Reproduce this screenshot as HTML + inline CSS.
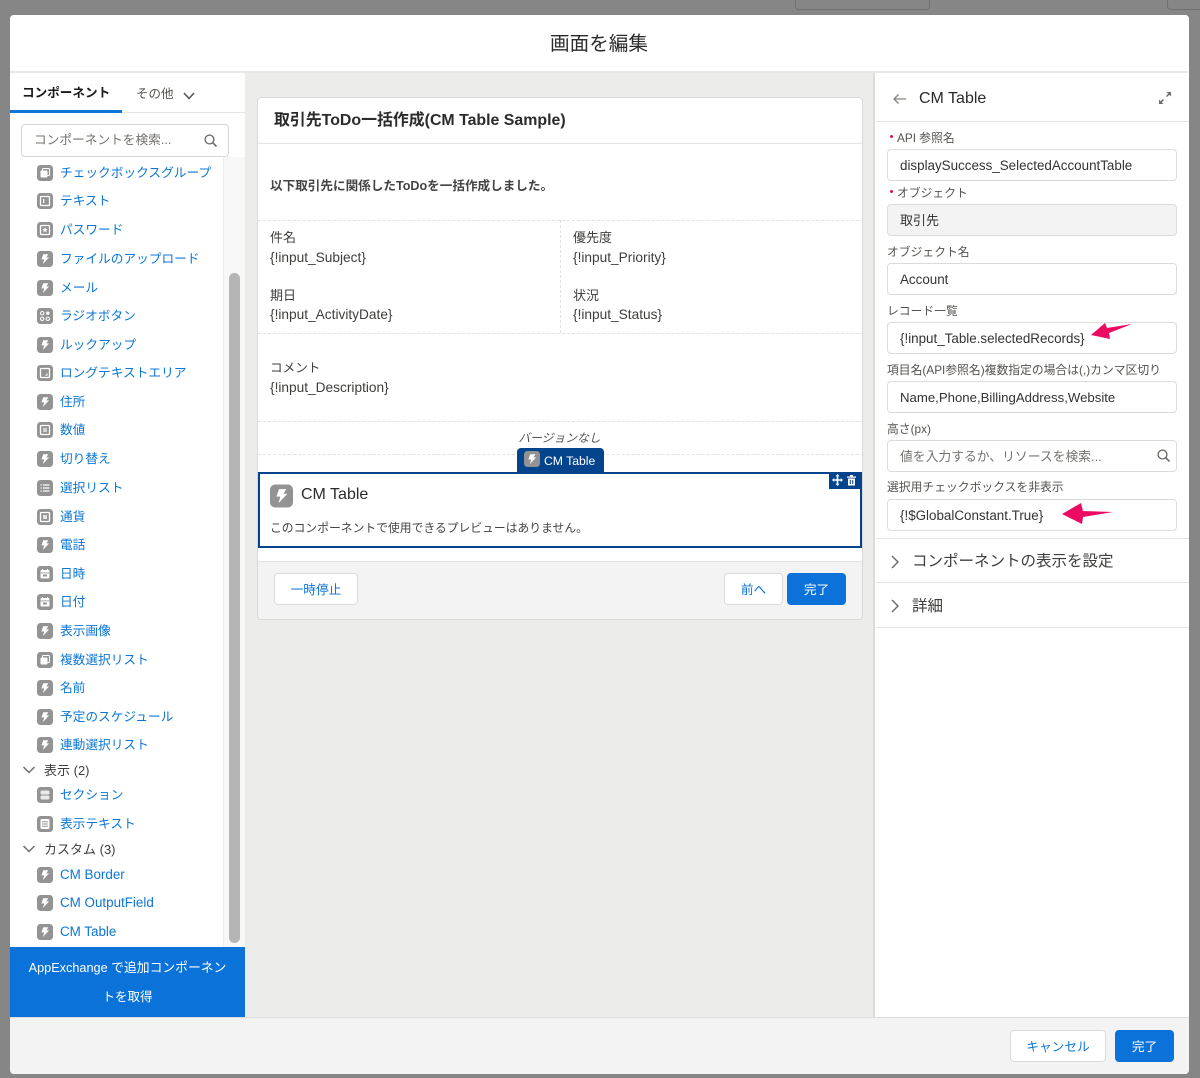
<!DOCTYPE html>
<html lang="ja"><head><meta charset="utf-8"><title>画面を編集</title>
<style>
*{box-sizing:border-box}
html,body{margin:0;padding:0}
body{width:1200px;height:1078px;overflow:hidden;position:relative;background:#868686;font-family:"Liberation Sans","Noto Sans CJK JP",sans-serif;color:#3e3e3c}
.a{position:absolute;white-space:nowrap}
#m{position:absolute;left:10px;top:15px;width:1179px;height:1059px;background:#fff;border-radius:4px;overflow:hidden}
.it{position:absolute;left:27px;height:20px;width:190px}
.it svg{position:absolute;left:0;top:3px;width:16px;height:16px}
.it span{position:absolute;left:23px;top:1px;line-height:20px;font-size:12.7px;color:#0b76d6;white-space:nowrap}
.it span.la{font-size:13.4px}
.in{position:absolute;left:12px;width:290px;height:32px;border:1px solid #dcdbd9;border-radius:4px;background:#fff;font-size:13.4px;line-height:31.500px;padding-left:12px;color:#333;white-space:nowrap}
.lb{position:absolute;left:12px;font-size:11.800px;line-height:16px;color:#55534f;white-space:nowrap}
.dot{position:absolute;left:15px;width:3px;height:3px;border-radius:50%;background:#e0125a}
.btn{position:absolute;height:32px;border-radius:4px;font-size:12.700px;line-height:32px;text-align:center;border:1px solid #dddbda;background:#fff;color:#0b76d6}
.pri{background:#0b72d9;border-color:#0b72d9;color:#fff}
.t{position:absolute;font-size:13px;line-height:20px;color:#3e3e3c;white-space:nowrap}
.t.la{font-size:13.700px}
.dash{position:absolute;border-top:1px dashed #e2e1df;height:0}
</style></head><body>
<svg width="0" height="0" style="position:absolute"><defs>
<symbol id="b" viewBox="0 0 16 16"><rect width="16" height="16" rx="3.500" fill="#939393"/><path d="M6.300 3.200h5L9.400 6.400h2.700L5.900 13l1.300-4.600H4.400z" fill="#fff"/></symbol>
<symbol id="f" viewBox="0 0 16 16"><rect width="16" height="16" rx="3.500" fill="#939393"/><rect x="3.500" y="3.500" width="9" height="9" rx="1" fill="none" stroke="#fff" stroke-width="1.300"/><rect x="6" y="6" width="1.300" height="4" fill="#fff"/></symbol>
<symbol id="pw" viewBox="0 0 16 16"><rect width="16" height="16" rx="3.500" fill="#939393"/><rect x="3.500" y="3.500" width="9" height="9" rx="1" fill="none" stroke="#fff" stroke-width="1.300"/><path d="M8 5.300l.8 1.700 1.800.2-1.300 1.200.4 1.800L8 9.300l-1.700.9.400-1.800-1.300-1.200 1.800-.2z" fill="#fff"/></symbol>
<symbol id="num" viewBox="0 0 16 16"><rect width="16" height="16" rx="3.500" fill="#939393"/><rect x="3.500" y="3.500" width="9" height="9" rx="1" fill="none" stroke="#fff" stroke-width="1.300"/><path d="M7 6v4M9 6v4M6 7h4M6 9h4" stroke="#fff" stroke-width=".7"/></symbol>
<symbol id="cur" viewBox="0 0 16 16"><rect width="16" height="16" rx="3.500" fill="#939393"/><rect x="3.500" y="3.500" width="9" height="9" rx="1" fill="none" stroke="#fff" stroke-width="1.300"/><rect x="6" y="6" width="4" height="4" fill="#fff" opacity=".75"/></symbol>
<symbol id="long" viewBox="0 0 16 16"><rect width="16" height="16" rx="3.500" fill="#939393"/><rect x="3.500" y="3.500" width="9" height="9" rx="1" fill="none" stroke="#fff" stroke-width="1.300"/><path d="M10.500 8v2.500H8z" fill="#fff"/></symbol>
<symbol id="l" viewBox="0 0 16 16"><rect width="16" height="16" rx="3.500" fill="#939393"/><path d="M6 5h6.500M6 8h6.500M6 11h6.500" stroke="#fff" stroke-width="1.300"/><path d="M3.500 5h1.200M3.500 8h1.200M3.500 11h1.200" stroke="#fff" stroke-width="1.300"/></symbol>
<symbol id="sec" viewBox="0 0 16 16"><rect width="16" height="16" rx="3.500" fill="#939393"/><rect x="3.500" y="3.500" width="9" height="4" rx="1.500" fill="#fff" opacity=".8"/><rect x="3.500" y="8.500" width="9" height="4" rx="1.500" fill="#fff" opacity=".8"/></symbol>
<symbol id="txt" viewBox="0 0 16 16"><rect width="16" height="16" rx="3.500" fill="#939393"/><rect x="3.500" y="3" width="9" height="10" rx="1.200" fill="#fff"/><path d="M5.200 5.800h5.600M5.200 8h5.600M5.200 10.200h5.600" stroke="#939393"/></symbol>
<symbol id="c" viewBox="0 0 16 16"><rect width="16" height="16" rx="3.500" fill="#939393"/><rect x="3.500" y="4" width="9" height="8.500" rx="1" fill="#fff"/><rect x="3.500" y="6.500" width="9" height=".8" fill="#939393"/><path d="M5.500 3v2M10.500 3v2" stroke="#fff"/><rect x="6" y="8.500" width="4" height="2" fill="#939393"/></symbol>
<symbol id="d" viewBox="0 0 16 16"><rect width="16" height="16" rx="3.500" fill="#939393"/><rect x="5.500" y="3.500" width="7" height="7" rx="1" fill="none" stroke="#fff"/><rect x="3.500" y="5.500" width="7" height="7" rx="1" fill="#fff"/></symbol>
<symbol id="s" viewBox="0 0 16 16"><circle cx="6.500" cy="6.500" r="4.400" fill="none" stroke="#706e6b" stroke-width="1.400"/><path d="M9.800 9.800L13.500 13.500" stroke="#706e6b" stroke-width="1.700"/></symbol>
</defs></svg>

<!-- background page remnants -->
<div class="a" style="left:795px;top:-4px;width:135px;height:14px;border:1px solid #707070;border-radius:4px"></div>
<div class="a" style="left:1167px;top:-4px;width:40px;height:14px;border:1px solid #707070;border-radius:4px"></div>

<div id="m">
 <!-- header -->
 <div class="a" style="left:0;top:0;width:1178px;height:58px;background:#fff;border-bottom:2px solid #e8e8e8;text-align:center;font-size:19.600px;line-height:58px;color:#2b2b2b">画面を編集</div>

 <!-- centre -->
 <div class="a" style="left:234px;top:58px;width:630px;height:944px;background:#ececeb"></div>

 <!-- left -->
 <div class="a" style="left:0;top:58px;width:235px;height:944px;background:#fff">
  <div class="a" style="left:214px;top:84px;width:21px;height:790px;background:#f8f8f8"></div>
  <div class="a" style="left:12px;top:10px;font-size:12.600px;line-height:20px;font-weight:700;color:#1a1a1a">コンポーネント</div>
  <div class="a" style="left:126px;top:11px;font-size:12.500px;line-height:20px;color:#55534f">その他</div>
  <svg class="a" style="left:172px;top:18px" width="14" height="10" viewBox="0 0 14 10"><path d="M2 2l5 5.500L12 2" fill="none" stroke="#55534f" stroke-width="1.500"/></svg>
  <div class="a" style="left:0;top:39px;width:235px;height:1px;background:#e5e5e5"></div>
  <div class="a" style="left:0;top:37px;width:112px;height:3px;background:#0b76d6"></div>
  <div class="a" style="left:11px;top:51px;width:208px;height:33px;border:1px solid #d8d7d5;border-radius:4px;padding-left:12px;font-size:12.700px;line-height:31px;color:#75736f;background:#fff">コンポーネントを検索...</div>
  <svg class="a" style="left:193px;top:60px" width="16" height="16"><use href="#s"/></svg>
  <div class="a" style="left:213px;top:84px;width:1px;height:790px;background:#eeeeee"></div>
  <div class="a" style="left:219px;top:200px;width:11px;height:670px;border-radius:6px;background:#b5b5b5"></div>
 </div>

 <div class="it" style="top:147px"><svg><use href="#d"/></svg><span>チェックボックスグループ</span></div>
 <div class="it" style="top:175px"><svg><use href="#f"/></svg><span>テキスト</span></div>
 <div class="it" style="top:204px"><svg><use href="#pw"/></svg><span>パスワード</span></div>
 <div class="it" style="top:233px"><svg><use href="#b"/></svg><span>ファイルのアップロード</span></div>
 <div class="it" style="top:262px"><svg><use href="#b"/></svg><span>メール</span></div>
 <div class="it" style="top:290px"><svg viewBox="0 0 16 16"><rect width="16" height="16" rx="3.500" fill="#939393"/><circle cx="5.200" cy="5.200" r="1.700" fill="none" stroke="#fff"/><circle cx="10.800" cy="5.200" r="1.700" fill="#fff"/><circle cx="5.200" cy="10.800" r="1.700" fill="none" stroke="#fff"/><circle cx="10.800" cy="10.800" r="1.700" fill="none" stroke="#fff"/></svg><span>ラジオボタン</span></div>
 <div class="it" style="top:319px"><svg><use href="#b"/></svg><span>ルックアップ</span></div>
 <div class="it" style="top:347px"><svg><use href="#long"/></svg><span>ロングテキストエリア</span></div>
 <div class="it" style="top:376px"><svg><use href="#b"/></svg><span>住所</span></div>
 <div class="it" style="top:404px"><svg><use href="#num"/></svg><span>数値</span></div>
 <div class="it" style="top:433px"><svg><use href="#b"/></svg><span>切り替え</span></div>
 <div class="it" style="top:462px"><svg><use href="#l"/></svg><span>選択リスト</span></div>
 <div class="it" style="top:491px"><svg><use href="#cur"/></svg><span>通貨</span></div>
 <div class="it" style="top:519px"><svg><use href="#b"/></svg><span>電話</span></div>
 <div class="it" style="top:548px"><svg><use href="#c"/></svg><span>日時</span></div>
 <div class="it" style="top:576px"><svg><use href="#c"/></svg><span>日付</span></div>
 <div class="it" style="top:605px"><svg><use href="#b"/></svg><span>表示画像</span></div>
 <div class="it" style="top:634px"><svg><use href="#d"/></svg><span>複数選択リスト</span></div>
 <div class="it" style="top:662px"><svg><use href="#b"/></svg><span>名前</span></div>
 <div class="it" style="top:691px"><svg><use href="#b"/></svg><span>予定のスケジュール</span></div>
 <div class="it" style="top:719px"><svg><use href="#b"/></svg><span>連動選択リスト</span></div>

 <svg class="a" style="left:12px;top:750px" width="14" height="10" viewBox="0 0 14 10"><path d="M1.500 2l5.500 5.500L12.500 2" fill="none" stroke="#706e6b" stroke-width="1.500"/></svg>
 <div class="a" style="left:34px;top:746px;font-size:13px;line-height:20px;color:#3e3e3c">表示 (2)</div>
 <div class="it" style="top:769px"><svg><use href="#sec"/></svg><span>セクション</span></div>
 <div class="it" style="top:798px"><svg><use href="#txt"/></svg><span>表示テキスト</span></div>
 <svg class="a" style="left:12px;top:829px" width="14" height="10" viewBox="0 0 14 10"><path d="M1.500 2l5.500 5.500L12.500 2" fill="none" stroke="#706e6b" stroke-width="1.500"/></svg>
 <div class="a" style="left:34px;top:825px;font-size:13px;line-height:20px;color:#3e3e3c">カスタム (3)</div>
 <div class="it" style="top:849px"><svg><use href="#b"/></svg><span class="la">CM Border</span></div>
 <div class="it" style="top:877px"><svg><use href="#b"/></svg><span class="la">CM OutputField</span></div>
 <div class="it" style="top:906px"><svg><use href="#b"/></svg><span class="la">CM Table</span></div>

 <div class="a" style="left:0;top:932px;width:235px;height:70px;background:#0b72d9;color:#fff;font-size:12.700px;line-height:29px;text-align:center;padding:6px 0 0">AppExchange <span style="font-size:12.800px">で追加コンポーネン</span><br><span style="font-size:12.500px">トを取得</span></div>

 <!-- card -->
 <div class="a" style="left:247px;top:82px;width:606px;height:523px;background:#fff;border:1px solid #d9d8d6;border-radius:4px;overflow:hidden">
  <div class="a" style="left:16px;top:12px;font-size:15.900px;line-height:22px;font-weight:700;color:#2b2b2b">取引先ToDo一括作成(CM Table Sample)</div>
  <div class="a" style="left:0;top:45px;width:606px;height:1px;background:#e5e5e5"></div>
  <div class="t" style="left:12px;top:78px;font-size:12.600px;font-weight:700;color:#444">以下取引先に関係したToDoを一括作成しました。</div>
  <div class="dash" style="left:0;top:122px;width:606px"></div>
  <div class="a" style="left:302px;top:122px;height:113px;border-left:1px dashed #e2e1df"></div>
  <div class="t" style="left:12px;top:130px">件名</div><div class="t la" style="left:12px;top:150px">{!input_Subject}</div>
  <div class="t" style="left:12px;top:188px">期日</div><div class="t la" style="left:12px;top:207px">{!input_ActivityDate}</div>
  <div class="t" style="left:315px;top:130px">優先度</div><div class="t la" style="left:315px;top:150px">{!input_Priority}</div>
  <div class="t" style="left:315px;top:188px">状況</div><div class="t la" style="left:315px;top:207px">{!input_Status}</div>
  <div class="dash" style="left:0;top:235px;width:606px"></div>
  <div class="t" style="left:12px;top:260px;font-size:12.600px">コメント</div><div class="t la" style="left:12px;top:280px">{!input_Description}</div>
  <div class="dash" style="left:0;top:323px;width:606px"></div>
  <div class="t" style="left:0;width:603px;text-align:center;top:330px;font-size:11.800px;font-style:italic;color:#55534f">バージョンなし</div>
  <div class="dash" style="left:0;top:356px;width:606px"></div>
  <div class="a" style="left:259px;top:350px;width:87px;height:25px;background:#04448d;border-radius:4px 4px 0 0;color:#fff;font-size:12.200px;line-height:26px;padding-left:27px">CM Table</div>
  <svg class="a" style="left:266px;top:353px" width="16" height="16" viewBox="0 0 16 16"><use href="#b"/></svg>
  <div class="a" style="left:0;top:374px;width:604px;height:76px;border:2px solid #04448d;background:#fff"></div>
  <div class="a" style="left:571px;top:374px;width:33px;height:17px;background:#04448d"></div>
  <svg class="a" style="left:573px;top:375px" width="28" height="14" viewBox="0 0 28 14"><path d="M6.500 2v10M2 7h9" stroke="#fff" stroke-width="1.600"/><path d="M6.500 1l2 2.200h-4zM6.500 13l2-2.200h-4zM1 7l2.200-2v4zM12 7L9.800 5v4z" fill="#fff"/><path d="M16 3.500h9v1.200h-9zM19 2h3v1.500h-3z" fill="#fff"/><path d="M17 5.500h7V12.500h-7z" fill="#fff"/><path d="M19.300 7v4M21.700 7v4" stroke="#04448d"/></svg>
  <svg class="a" style="left:12px;top:386px" width="23" height="24" viewBox="0 0 16 16"><use href="#b"/></svg>
  <div class="a" style="left:43px;top:386px;font-size:16px;line-height:22px;color:#2b2b2b">CM Table</div>
  <div class="t" style="left:12px;top:420px;font-size:11.800px;color:#444">このコンポーネントで使用できるプレビューはありません。</div>
  <div class="a" style="left:0;top:463px;width:606px;height:60px;background:#f3f3f3;border-top:1px solid #e2e2e2"></div>
  <div class="btn" style="left:16px;top:475px;width:84px">一時停止</div>
  <div class="btn" style="left:466px;top:475px;width:59px">前へ</div>
  <div class="btn pri" style="left:529px;top:475px;width:59px">完了</div>
 </div>

 <!-- right -->
 <div class="a" style="left:863px;top:58px;width:316px;height:944px;background:#fff;border-left:2px solid #dcdcdc">
  <svg class="a" style="left:17px;top:19px" width="16" height="14" viewBox="0 0 16 14"><path d="M14 7H2M6.500 2.500L2 7l4.500 4.500" fill="none" stroke="#85837f" stroke-width="1.300"/></svg>
  <div class="a" style="left:44px;top:15px;font-size:16px;line-height:22px;color:#2b2b2b">CM Table</div>
  <svg class="a" style="left:282px;top:17px" width="16" height="16" viewBox="0 0 16 16"><path d="M9.500 6.500L13 3M2.800 13.200L6.500 9.500" stroke="#706e6b" stroke-width="1.500"/><path d="M9.500 2H14v4.500zM2 9.500V14h4.500z" fill="#706e6b"/></svg>
  <div class="a" style="left:1px;top:48px;width:315px;height:1px;background:#e5e5e5"></div>

  <div class="dot" style="top:62px"></div>
  <div class="lb" style="left:22px;top:57px">API 参照名</div>
  <div class="in" style="top:76px">displaySuccess_SelectedAccountTable</div>
  <div class="dot" style="top:117px"></div>
  <div class="lb" style="left:22px;top:112px">オブジェクト</div>
  <div class="in" style="top:131px;background:#f3f3f3;font-size:13px">取引先</div>
  <div class="lb" style="top:171px">オブジェクト名</div>
  <div class="in" style="top:190px">Account</div>
  <div class="lb" style="top:230px">レコード一覧</div>
  <div class="in" style="top:249px">{!input_Table.selectedRecords}</div>
  <div class="lb" style="top:289px">項目名(API参照名)複数指定の場合は(,)カンマ区切り</div>
  <div class="in" style="top:308px;font-size:13.200px">Name,Phone,BillingAddress,Website</div>
  <div class="lb" style="top:348px">高さ(px)</div>
  <div class="in" style="top:367px;color:#75736f;font-size:12.800px">値を入力するか、リソースを検索...</div>
  <svg class="a" style="left:281px;top:375px" width="16" height="16"><use href="#s"/></svg>
  <div class="lb" style="top:406px">選択用チェックボックスを非表示</div>
  <div class="in" style="top:426px">{!$GlobalConstant.True}</div>

  <div class="a" style="left:1px;top:465px;width:315px;height:1px;background:#e5e5e5"></div>
  <svg class="a" style="left:15px;top:481px" width="10" height="16" viewBox="0 0 10 16"><path d="M2 2l6 6-6 6" fill="none" stroke="#706e6b" stroke-width="1.500"/></svg>
  <div class="a" style="left:37px;top:477px;font-size:15.500px;line-height:24px;color:#3e3e3c">コンポーネントの表示を設定</div>
  <div class="a" style="left:1px;top:509px;width:315px;height:1px;background:#e5e5e5"></div>
  <svg class="a" style="left:15px;top:525px" width="10" height="16" viewBox="0 0 10 16"><path d="M2 2l6 6-6 6" fill="none" stroke="#706e6b" stroke-width="1.500"/></svg>
  <div class="a" style="left:37px;top:522px;font-size:15.500px;line-height:24px;color:#3e3e3c">詳細</div>
  <div class="a" style="left:1px;top:554px;width:315px;height:1px;background:#e5e5e5"></div>
 </div>

 <!-- footer -->
 <div class="a" style="left:0;top:1002px;width:1179px;height:57px;background:#f3f3f3;border-top:1px solid #dedede"></div>
 <div class="btn" style="left:1000px;top:1015px;width:96px">キャンセル</div>
 <div class="btn pri" style="left:1105px;top:1015px;width:59px">完了</div>
</div>

<!-- annotation arrows, in page coordinates -->
<svg class="a" style="left:0;top:0" width="1200" height="1078" viewBox="0 0 1200 1078">
 <path d="M1091 335L1105 323L1107 328L1132 324L1109 333L1110 339Z" fill="#ec0a63"/>
 <path d="M1062 514L1081 503L1083 511L1113 512L1083 517L1082 524Z" fill="#ec0a63"/>
</svg>
</body></html>
